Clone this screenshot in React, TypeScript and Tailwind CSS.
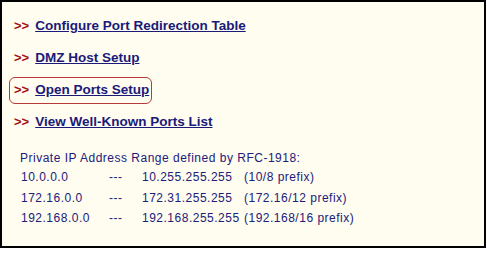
const links = [
  "Configure Port Redirection Table",
  "DMZ Host Setup",
  "Open Ports Setup",
  "View Well-Known Ports List",
];

const ranges = [
  ["10.0.0.0", "10.255.255.255", "(10/8 prefix)"],
  ["172.16.0.0", "172.31.255.255", "(172.16/12 prefix)"],
  ["192.168.0.0", "192.168.255.255", "(192.168/16 prefix)"],
];

export default function App() {
  return (
    <div className="h-[255px] w-[487px] bg-white font-['Liberation_Sans',Arial,sans-serif]">
      <div className="flex h-[248px] w-[486px] flex-col border-2 border-black bg-[#fffcf0] pl-[7px] pt-[14px]">
        <div className="flex flex-col gap-[12px]">
          {links.map((label, i) => (
            <div key={label} className="flex h-[20px] items-center">
              <div
                className={
                  i === 2
                    ? "flex h-[27px] items-center gap-[6px] rounded-[6px] border border-[#b8393b] pl-[4px] pr-[2px]"
                    : "flex h-[27px] items-center gap-[6px] border border-transparent pl-[4px] pr-[2px]"
                }
              >
                <span className="text-[13px] font-bold text-[#a01010]">&gt;&gt;</span>
                <a href="#" className="text-[13.5px] font-bold text-[#1a1a7a] underline">
                  {label}
                </a>
              </div>
            </div>
          ))}
        </div>
        <div className="mt-[17px] pl-[11px] text-[12px] tracking-[0.5px] text-[#20207a]">
          <p className="flex h-[18px] items-center">Private IP Address Range defined by RFC-1918:</p>
          {ranges.map(([from, to, prefix]) => (
            <div key={from} className="flex h-[20.5px] items-center">
              <span className="w-[89px] pl-[1px]">{from}</span>
              <span className="w-[33px]">---</span>
              <span className="w-[102px]">{to}</span>
              <span>{prefix}</span>
            </div>
          ))}
        </div>
      </div>
    </div>
  );
}
